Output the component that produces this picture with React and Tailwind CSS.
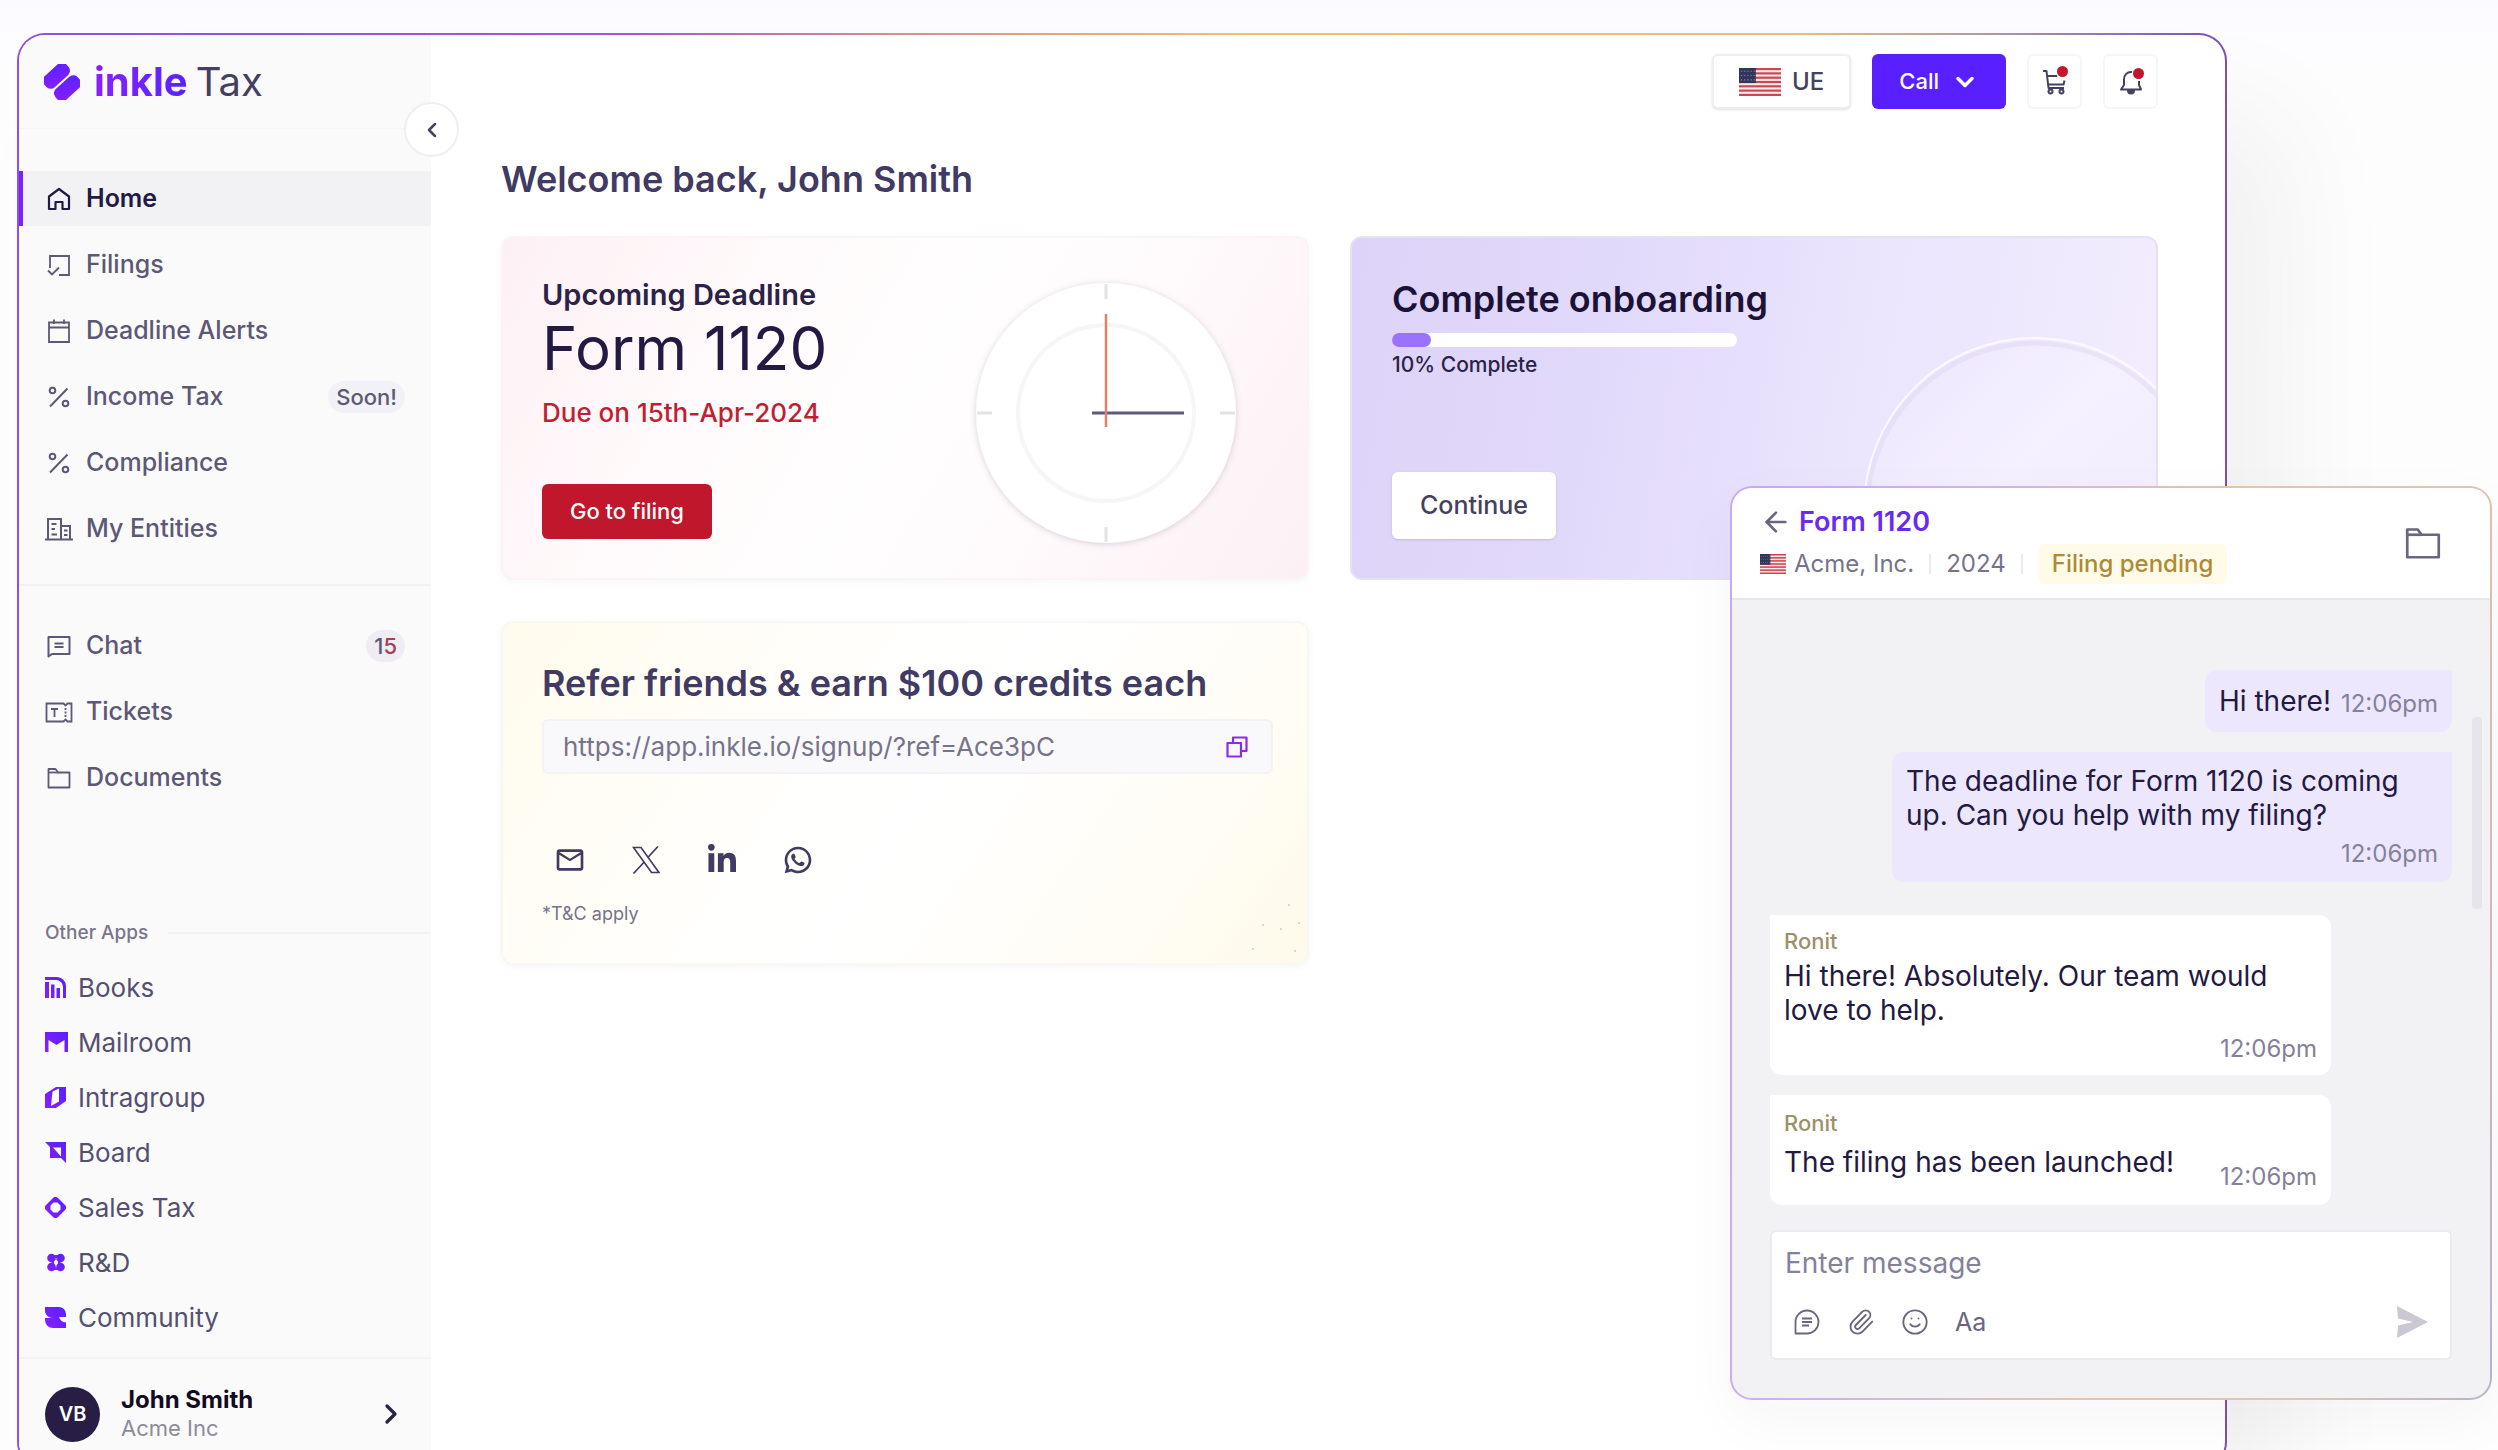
import React from 'react';
import { ArrowLeft, ChevronDown, ChevronLeft, ChevronRight, Paperclip, Smile } from 'lucide-react';
import { FaLinkedinIn } from 'react-icons/fa';
import { MdOutlineMailOutline } from 'react-icons/md';
import { RiWhatsappLine } from 'react-icons/ri';

const HomeIcon = () => (
  <svg viewBox="0 0 24 24" className="w-6 h-6" fill="none" stroke="currentColor" strokeWidth="2.2">
    <path d="M2 22V9.5L12 2l10 7.500V22h-6.500v-7h-7v7z" strokeLinejoin="round" />
  </svg>
);

const FilingsIcon = () => (
  <svg viewBox="0 0 24 24" className="w-6 h-6" fill="none" stroke="currentColor" strokeWidth="1.8">
    <path d="M3 15V3h19v19H12" />
    <path d="M1 17.500l4 4 7-7" />
  </svg>
);

const CalendarIcon = () => (
  <svg viewBox="0 0 24 24" className="w-6 h-6" fill="none" stroke="currentColor" strokeWidth="1.8">
    <path d="M2 3.500h20V23H2zM2 8.500h20M7 .5V5M17 .5V5" />
  </svg>
);

const PercentIcon = () => (
  <svg viewBox="0 0 24 24" className="w-6 h-6" fill="none" stroke="currentColor" strokeWidth="2">
    <path d="M3 21.500L20.500 3.500" />
    <circle cx="5.500" cy="5.500" r="2.800" />
    <circle cx="18.500" cy="18.500" r="2.800" />
  </svg>
);

const EntitiesIcon = () => (
  <svg viewBox="0 0 28 24" className="w-7 h-6" fill="none" stroke="currentColor" strokeWidth="2">
    <path d="M0 22.500h28M3 22V2h13v20M16 9h9v13" />
    <path d="M6.500 7h5M6.500 12h3.500M6.500 17.500h5.500M19 13.500h3.500M19 18h3.500" />
  </svg>
);

const ChatIcon = () => (
  <svg viewBox="0 0 24 24" className="w-6 h-6" fill="none" stroke="currentColor" strokeWidth="2">
    <path d="M1.500 22.500V3h21v17H5z" strokeLinejoin="round" />
    <path d="M7.500 9.500h9M7.500 13h9" />
  </svg>
);

const TicketIcon = () => (
  <svg viewBox="0 0 28 24" className="w-7 h-6" fill="none" stroke="currentColor" strokeWidth="1.800">
    <path d="M1.500 3.500h17l2 2 2-2h4v18h-4l-2-2-2 2h-17z" />
    <path d="M6 9h7M9.500 9v8" />
    <path d="M20.500 8v9" strokeDasharray="2 1.500" />
  </svg>
);

const FolderIcon = ({ className = 'w-6 h-6' }) => (
  <svg viewBox="0 0 24 24" className={className} fill="none" stroke="currentColor" strokeWidth="1.800">
    <path d="M1.500 21.500V3h7l2.500 3.500h11.500v15z" strokeLinejoin="round" />
    <path d="M1.500 6.500h10" />
  </svg>
);

const XLogo = ({ className }) => (
  <svg viewBox="0 0 28 28" className={className} fill="none" stroke="currentColor" strokeWidth="1.700">
    <path d="M1.500 1.500h7.500l18 25h-7.500z" />
    <path d="M26 .5L15.800 11.500M1.500 27.500L12.200 16" />
  </svg>
);

const BooksLogo = () => (
  <g>
    <path d="M0 0h12a9 9 0 0 1 9 9v12h-3V10a7 7 0 0 0-7-7H0z" />
    <path d="M0 5h4v16H0zM6 7.500h3.500V21H6zM11.500 11H15v10h-3.500z" />
  </g>
);
const MailroomLogo = () => <path d="M0 0h23v20h-3.500V8L11.500 13 3.500 8V20H0z" />;
const IntragroupLogo = () => <path fillRule="evenodd" d="M0 7L11 0h10v14L11 21H0zM7.500 4.500L6 19l8-4.500V1.500z" />;
const BoardLogo = () => <path fillRule="evenodd" d="M0 0h21v21l-5-5H5V5zM8 5.500h8v9z" />;
const SalesLogo = () => (
  <path
    fillRule="evenodd"
    d="M8 1a3.500 3.500 0 0 1 5 0l7 7a3.500 3.500 0 0 1 0 5l-7 7a3.500 3.500 0 0 1-5 0l-7-7a3.500 3.500 0 0 1 0-5zM8.500 5.500h4l3 3v4l-3 3h-4l-3-3v-4z"
  />
);
const RndLogo = () => (
  <g>
    <circle cx="6.500" cy="6" r="4.300" />
    <circle cx="15.500" cy="6" r="4.300" />
    <circle cx="6.500" cy="15" r="4.300" />
    <circle cx="15.500" cy="15" r="4.300" />
    <path d="M6.500 3h9v2.500h-9zM6.500 15.500h9V18h-9zM6.500 6h2.500v9H6.500zM13 6h2.500v9H13z" />
  </g>
);
const CommunityLogo = () => (
  <path d="M0 0h14a7 7 0 0 1 7 7v3h-7a8 8 0 0 0 7 5.500V21H8a8 8 0 0 1-8-8v-2h7A8 8 0 0 1 0 4.500z" />
);

const Flag = ({ className }) => (
  <svg viewBox="0 0 40 26" preserveAspectRatio="none" className={className} aria-label="United States">
    <rect width="40" height="26" fill="#f6e9ea" />
    {[0, 4, 8, 12, 16, 20, 24].map((y) => (
      <rect key={y} y={y} width="40" height="2" fill="#cc4650" />
    ))}
    <rect width="16" height="14" fill="#34355a" />
    {[3, 7, 11].map((y) => (
      <path key={y} d={`M2 ${y}h13`} stroke="#8d8fb0" strokeWidth="1" strokeDasharray="1 2" />
    ))}
  </svg>
);

const mainNav = [
  { label: 'Home', icon: HomeIcon, active: true },
  { label: 'Filings', icon: FilingsIcon },
  { label: 'Deadline Alerts', icon: CalendarIcon },
  { label: 'Income Tax', icon: PercentIcon, badge: 'Soon!' },
  { label: 'Compliance', icon: PercentIcon },
  { label: 'My Entities', icon: EntitiesIcon },
];

const supportNav = [
  { label: 'Chat', icon: ChatIcon, count: '15' },
  { label: 'Tickets', icon: TicketIcon },
  { label: 'Documents', icon: FolderIcon },
];

const otherApps = [
  { label: 'Books', logo: BooksLogo },
  { label: 'Mailroom', logo: MailroomLogo },
  { label: 'Intragroup', logo: IntragroupLogo },
  { label: 'Board', logo: BoardLogo },
  { label: 'Sales Tax', logo: SalesLogo },
  { label: 'R&D', logo: RndLogo },
  { label: 'Community', logo: CommunityLogo },
];

const NavItem = ({ item }) => {
  const Icon = item.icon;
  return (
    <a
      href="#"
      className={`flex items-center h-[55px] pl-5 pr-[26px] border-l-4 text-[25px] ${
        item.active
          ? 'border-[#7a22ff] bg-[#f2f2f4] text-[#231942] font-semibold'
          : 'border-transparent text-[#5d5875] font-medium'
      }`}
    >
      <span className="flex justify-center w-8 mr-[11px]">
        <Icon />
      </span>
      {item.label}
      {item.badge && (
        <span className="ml-auto px-2 rounded-full bg-[#f2f1f7] text-[22px] leading-8">{item.badge}</span>
      )}
      {item.count && (
        <span className="ml-auto px-2 rounded-full bg-[#efedf3] text-[22px] leading-8">
          1<span className="text-[#a6404f]">5</span>
        </span>
      )}
    </a>
  );
};

const Sidebar = () => (
  <aside className="relative flex flex-col w-[412px] shrink-0 bg-[#fafafb] rounded-l-[26px]">
    <div className="flex items-center h-[94px] pl-[25px] border-b border-[#f5f5f7]">
      <svg viewBox="0 0 36 36" className="w-9 h-9 mr-[14px]" aria-hidden="true">
        <defs>
          <linearGradient id="purple" x1="0" y1="1" x2="1" y2="0">
            <stop offset="0" stopColor="#8b1dff" />
            <stop offset="1" stopColor="#5622ff" />
          </linearGradient>
        </defs>
        <g fill="url(#purple)" transform="rotate(-42 18 18)">
          <rect x="3" y="2" width="30" height="15" rx="6" />
          <rect x="3" y="19" width="30" height="15" rx="6" />
        </g>
      </svg>
      <span className="text-[40px] leading-none font-bold bg-gradient-to-r from-[#8b1dff] to-[#5622ff] bg-clip-text text-transparent">
        inkle
      </span>
      <span className="ml-2 text-[40px] leading-none text-[#46405f]">Tax</span>
    </div>
    <button
      aria-label="Collapse sidebar"
      className="absolute top-[67px] -right-[28px] z-10 flex items-center justify-center w-[55px] h-[55px] rounded-full bg-white border-2 border-[#efeff2]"
    >
      <ChevronLeft className="w-6 h-6 text-[#46405f]" strokeWidth={2.5} />
    </button>

    <nav className="flex flex-col gap-[11px] pt-[42px] pb-[28px] border-b-2 border-[#f1f1f3]">
      {mainNav.map((item) => (
        <NavItem key={item.label} item={item} />
      ))}
    </nav>
    <nav className="flex flex-col gap-[11px] pt-8">
      {supportNav.map((item) => (
        <NavItem key={item.label} item={item} />
      ))}
    </nav>

    <div className="flex items-center gap-5 mt-[114px] pl-[26px] text-[19px] leading-7 font-medium text-[#79758c]">
      Other Apps
      <span className="flex-1 border-t-2 border-[#f1f1f3]" />
    </div>
    <nav className="flex flex-col pt-[13px] pb-3 border-b-2 border-[#f3f3f6]">
      {otherApps.map(({ label, logo: Logo }) => (
        <a key={label} href="#" className="flex items-center h-[55px] pl-[26px] text-[26px] text-[#55506f]">
          <svg viewBox="0 0 23 21" className="w-[23px] h-[21px] mr-[10px]" fill="url(#purple)" aria-hidden="true">
            <Logo />
          </svg>
          {label}
        </a>
      ))}
    </nav>

    <button className="flex items-center pl-[26px] pr-6 pt-[27px] pb-[26px] text-left">
      <span className="flex items-center justify-center w-[55px] h-[55px] rounded-full bg-[#271d45] text-xl font-semibold text-white">
        VB
      </span>
      <span className="flex flex-col ml-[21px]">
        <span className="text-2xl leading-7 font-bold text-[#120b22]">John Smith</span>
        <span className="text-[22px] leading-7 text-[#8d8a9c]">Acme Inc</span>
      </span>
      <ChevronRight className="ml-auto w-8 h-8 text-[#2b2248]" strokeWidth={2.5} />
    </button>
  </aside>
);

const Topbar = () => (
  <div className="flex justify-end gap-[21px] pt-[19px]">
    <button className="flex items-center gap-[11px] h-[55px] px-[25px] rounded-md border-2 border-[#efeff2] bg-white text-2xl font-medium text-[#46405f] shadow-sm">
      <Flag className="w-[42px] h-7" />
      UE
    </button>
    <button className="flex items-center gap-3 h-[55px] px-[27px] rounded-md bg-[#5a1fff] text-[22px] font-medium text-white">
      Call
      <ChevronDown className="w-7 h-7" strokeWidth={3} />
    </button>
    <button
      aria-label="Cart"
      className="relative flex items-center justify-center w-[55px] h-[55px] rounded-md border-2 border-[#f6f6f8]"
    >
      <svg viewBox="0 0 28 28" className="w-7 h-7 text-[#46405f]" fill="none" stroke="currentColor" strokeWidth="2">
        <path d="M2 3h3.500L7.500 20h15.500" strokeLinejoin="round" />
        <path d="M6.200 8h10M7.500 16.500h15l1-4" />
        <circle cx="9.500" cy="23.500" r="2" />
        <circle cx="20.500" cy="23.500" r="2" />
      </svg>
      <span className="absolute top-[10px] right-3 w-[11px] h-[11px] rounded-full bg-[#c3152b]" />
    </button>
    <button
      aria-label="Notifications"
      className="relative flex items-center justify-center w-[55px] h-[55px] rounded-md border-2 border-[#f6f6f8]"
    >
      <svg viewBox="0 0 28 28" className="w-7 h-7 text-[#46405f]" fill="none" stroke="currentColor" strokeWidth="2">
        <path d="M15 4C10 3.500 7 7 7 11.500V17l-3 4.500h20L22 17v-4" strokeLinejoin="round" />
        <path d="M11 22.500a3 3 0 0 0 6 0z" fill="currentColor" />
      </svg>
      <span className="absolute top-3 right-3 w-[11px] h-[11px] rounded-full bg-[#c3152b]" />
    </button>
  </div>
);

const Clock = () => (
  <svg viewBox="0 0 280 280" className="w-[280px] h-[280px]" fill="none" aria-hidden="true">
    <defs>
      <filter id="clockShadow" x="-10%" y="-10%" width="120%" height="120%">
        <feDropShadow dx="0" dy="1" stdDeviation="3" floodColor="#8a8098" floodOpacity="0.35" />
      </filter>
    </defs>
    <circle cx="140" cy="140" r="130" fill="#fff" filter="url(#clockShadow)" />
    <circle cx="140" cy="140" r="88" stroke="#f6f5f7" strokeWidth="4" />
    <path d="M140 11v15M140 254v15M11 140h15M254 140h15" stroke="#e3e2e6" strokeWidth="3" />
    <path d="M126 140h92" stroke="#5f5a7d" strokeWidth="3" />
    <path d="M140 41v113" stroke="#e0826a" strokeWidth="2.500" />
  </svg>
);

const DeadlineCard = () => (
  <section className="flex justify-between h-[344px] pl-[39px] pr-[61px] rounded-xl border-2 border-[#f9f5f7] bg-[linear-gradient(120deg,#fdf0f4_0%,#fffafb_28%,#fffefe_50%,#fffbfc_65%,#fcf0f4_100%)] shadow-[0_2px_8px_rgba(0,0,0,0.04)]">
    <div className="flex flex-col items-start pt-[39px]">
      <h2 className="text-[29px] leading-9 font-semibold text-[#2b2248]">Upcoming Deadline</h2>
      <p className="text-[60px] leading-[70px] text-[#231942]">Form 1120</p>
      <p className="mt-[14px] text-[26px] leading-8 font-medium text-[#bf1f33]">Due on 15th-Apr-2024</p>
      <button className="h-[55px] mt-[55px] px-7 rounded-md bg-[#c0172c] text-[22px] font-medium text-white">
        Go to filing
      </button>
    </div>
    <div className="pt-[35px]">
      <Clock />
    </div>
  </section>
);

const OnboardingCard = () => (
  <section className="relative flex flex-col items-start h-[344px] px-10 pt-[37px] rounded-xl border-2 border-[#e6e0f2] overflow-hidden bg-[linear-gradient(100deg,#dcd3f8_0%,#e1d9fa_30%,#eae4fd_60%,#f3edfe_100%)]">
    <svg viewBox="0 0 350 350" className="absolute -right-[54px] top-[96px] w-[350px] h-[350px]" fill="none" aria-hidden="true">
      <defs>
        <linearGradient id="orb" x1="0" y1="0" x2="1" y2="1">
          <stop offset="0" stopColor="#ebe4fd" />
          <stop offset="0.400" stopColor="#f6f2ff" />
          <stop offset="1" stopColor="#efe9fd" />
        </linearGradient>
      </defs>
      <circle cx="175" cy="175" r="171" fill="url(#orb)" fillOpacity="0.800" />
      <circle cx="175" cy="177" r="168" stroke="#d9d1f0" strokeWidth="5" opacity="0.400" />
      <circle cx="175" cy="175" r="171" stroke="#fbf9ff" strokeWidth="2" />
    </svg>
    <h2 className="relative text-4xl leading-[48px] font-semibold text-[#1c1238]">Complete onboarding</h2>
    <div className="relative w-[345px] h-[14px] mt-[10px] rounded-full bg-white">
      <div className="w-[39px] h-full rounded-full bg-[#9b72fb]" />
    </div>
    <p className="relative mt-1 text-[21px] leading-7 font-medium text-[#2b2248]">10% Complete</p>
    <button className="relative h-[67px] mt-auto mb-[39px] px-7 rounded-md bg-white text-[25px] font-medium text-[#46405f] shadow">
      Continue
    </button>
  </section>
);

const shareLinks = [
  { label: 'Email', icon: MdOutlineMailOutline },
  { label: 'X', icon: XLogo, small: true },
  { label: 'LinkedIn', icon: FaLinkedinIn },
  { label: 'WhatsApp', icon: RiWhatsappLine },
];

const specks = [[46, 6], [20, 26], [56, 24], [38, 30], [10, 50], [52, 52]];

const ReferCard = () => (
  <section className="relative h-[344px] pl-[39px] pr-[34px] pt-[38px] rounded-xl border-2 border-[#f8f7f4] bg-[linear-gradient(125deg,#fffbec_0%,#fffefa_32%,#ffffff_52%,#fffdf6_78%,#fefaea_100%)] shadow-[0_2px_8px_rgba(0,0,0,0.04)]">
    <h2 className="text-4xl leading-[44px] font-semibold text-[#413a63]">Refer friends &amp; earn $100 credits each</h2>
    <div className="flex items-center h-[55px] mt-[14px] pl-[19px] pr-[22px] rounded-md border-2 border-[#f3f3f6] bg-[#f9f9fb]">
      <input
        readOnly
        aria-label="Referral link"
        value="https://app.inkle.io/signup/?ref=Ace3pC"
        className="flex-1 min-w-0 bg-transparent text-[26px] text-[#77738b] outline-none"
      />
      <button aria-label="Copy link" className="text-[#8b2be8]">
        <svg viewBox="0 0 24 24" className="w-6 h-6" fill="none" stroke="currentColor" strokeWidth="2.200">
          <path d="M8 8V2.500h13.500V16H16" strokeLinejoin="round" />
          <path d="M2.500 8H16v13.500H2.500z" strokeLinejoin="round" />
        </svg>
      </button>
    </div>
    <div className="flex gap-[44px] mt-[70px] pl-3">
      {shareLinks.map(({ label, icon: Icon, small }) => (
        <a key={label} href="#" aria-label={label} className="flex items-center justify-center w-8 h-8 text-[#413a63]">
          <Icon className={small ? 'w-7 h-7' : 'w-8 h-8'} />
        </a>
      ))}
    </div>
    <p className="mt-6 text-lg text-[#77738b]">*T&amp;C apply</p>
    <svg viewBox="0 0 64 64" className="absolute right-0 bottom-0 w-16 h-16" fill="#cfc9b4" aria-hidden="true">
      {specks.map(([x, y]) => (
        <circle key={`${x}-${y}`} cx={x} cy={y} r="1" />
      ))}
    </svg>
  </section>
);

const Time = ({ className = '' }) => (
  <span className={`text-2xl leading-7 text-[#85819a] ${className}`}>12:06pm</span>
);

const ChatPanel = () => (
  <section className="absolute top-[486px] right-1.5 w-[762px] p-0.5 rounded-[22px] bg-[linear-gradient(100deg,#c9a6f7_0%,#cfb0f0_25%,#e8c4a8_55%,#e4c3ad_80%,#b9b2c9_100%)] shadow-[0_20px_60px_rgba(40,30,70,0.04)]">
    <div className="rounded-[20px] bg-[#f2f1f4] overflow-hidden">
      <header className="flex items-center justify-between h-[112px] pl-7 pr-[49px] bg-white border-b-2 border-[#e7e7ea]">
        <div className="flex flex-col gap-1 pt-0.5">
          <div className="flex items-center gap-[7px]">
            <button aria-label="Back" className="text-[#6a667f]">
              <ArrowLeft className="w-8 h-8" />
            </button>
            <h2 className="text-[27px] leading-9 font-semibold text-[#6a2bf0]">Form 1120</h2>
          </div>
          <div className="flex items-center text-2xl leading-10 text-[#77738b]">
            <Flag className="w-[26px] h-5 mr-2" />
            Acme, Inc.
            <span className="w-0.5 h-5 mx-[15px] bg-[#eceaf0]" />
            2024
            <span className="w-0.5 h-5 mx-[15px] bg-[#eceaf0]" />
            <span className="px-[14px] rounded-md bg-[#fffbe8] font-medium text-[#af8a35]">Filing pending</span>
          </div>
        </div>
        <button aria-label="Files" className="text-[#6a667f]">
          <FolderIcon className="w-9 h-9" />
        </button>
      </header>

      <div className="relative flex flex-col px-[38px] pt-[70px] pb-[38px] text-[28px] leading-[34px] text-[#231942]">
        <span className="absolute right-2 top-[117px] w-[10px] h-[192px] rounded bg-[#e6e5e9]" />
        <div className="self-end flex items-end gap-[10px] h-[62px] pb-[14px] px-[14px] rounded-xl rounded-tr-none bg-[#ece7fd]">
          Hi there!
          <Time />
        </div>
        <div className="self-end flex flex-col w-[560px] mt-5 px-[14px] pt-3 pb-[14px] rounded-xl rounded-tr-none bg-[#ece7fd]">
          The deadline for Form 1120 is coming up. Can you help with my filing?
          <Time className="self-end mt-2" />
        </div>
        <div className="flex flex-col w-[561px] mt-[33px] px-[14px] pt-3 pb-3 rounded-xl rounded-tl-none bg-white">
          <span className="text-[22px] leading-7 font-medium text-[#9c9168]">Ronit</span>
          <span className="mt-1">Hi there! Absolutely. Our team would love to help.</span>
          <Time className="self-end mt-2" />
        </div>
        <div className="flex flex-col w-[561px] mt-5 px-[14px] pt-[14px] pb-[14px] rounded-xl rounded-tl-none bg-white">
          <span className="text-[22px] leading-7 font-medium text-[#9c9168]">Ronit</span>
          <div className="flex items-end justify-between mt-2">
            <span className="pb-3">The filing has been launched!</span>
            <Time />
          </div>
        </div>
        <div className="flex flex-col mt-[25px] h-[130px] px-[13px] pt-[14px] rounded-md border-2 border-[#ebeaee] bg-white">
          <input
            aria-label="Message"
            placeholder="Enter message"
            className="w-full bg-transparent placeholder:text-[#85819a] outline-none"
          />
          <div className="flex items-center gap-[26px] mt-[25px] pl-2 pr-[9px] text-[#6a667f]">
            <button aria-label="Templates">
              <svg viewBox="0 0 28 28" className="w-7 h-7" fill="none" stroke="currentColor" strokeWidth="1.800">
                <path d="M2.500 25.500V14A11.500 11.500 0 1 1 14 25.500z" strokeLinejoin="round" />
                <path d="M9 10.500h10M9 14h10M9 17.500h7" />
              </svg>
            </button>
            <button aria-label="Attach a file">
              <Paperclip className="w-7 h-7" strokeWidth={1.6} />
            </button>
            <button aria-label="Emoji">
              <Smile className="w-7 h-7" strokeWidth={1.6} />
            </button>
            <button aria-label="Formatting" className="text-[25px] leading-8">
              Aa
            </button>
            <button aria-label="Send" className="ml-auto text-[#cbc8d3]">
              <svg viewBox="0 0 32 34" className="w-8 h-[34px]" fill="currentColor">
                <path d="M1 1l31 16L1 33l1-12.500L17 17 2 13.500z" />
              </svg>
            </button>
          </div>
        </div>
      </div>
    </div>
  </section>
);

const App = () => {
  return (
    <div className="relative h-screen overflow-hidden bg-[linear-gradient(180deg,#fbfaff_0px,#fdfdfe_60px,#fefefe_100%)] pt-[33px] pl-[17px] pr-[271px] font-['Inter',sans-serif]">
      <div className="p-0.5 rounded-[28px] bg-[linear-gradient(90deg,#9050dc_0%,#a558cf_28%,#d98f8a_40%,#f2bd6f_55%,#f2bd78_80%,#a796a8_90%,#8660bd_97%,#7d4fb5_100%)] shadow-[60px_80px_120px_rgba(0,0,0,0.05)]">
        <div className="flex rounded-[26px] bg-white">
          <Sidebar />
          <main className="flex-1 min-w-0 pl-[70px] pr-[67px]">
            <Topbar />
            <h1 className="mt-[46px] text-4xl leading-[48px] font-semibold text-[#413a63]">
              Welcome back, John Smith
            </h1>
            <div className="grid grid-cols-2 gap-x-[41px] gap-y-[41px] mt-[33px]">
              <DeadlineCard />
              <OnboardingCard />
              <ReferCard />
            </div>
          </main>
        </div>
      </div>
      <ChatPanel />
    </div>
  );
};

export default App;
